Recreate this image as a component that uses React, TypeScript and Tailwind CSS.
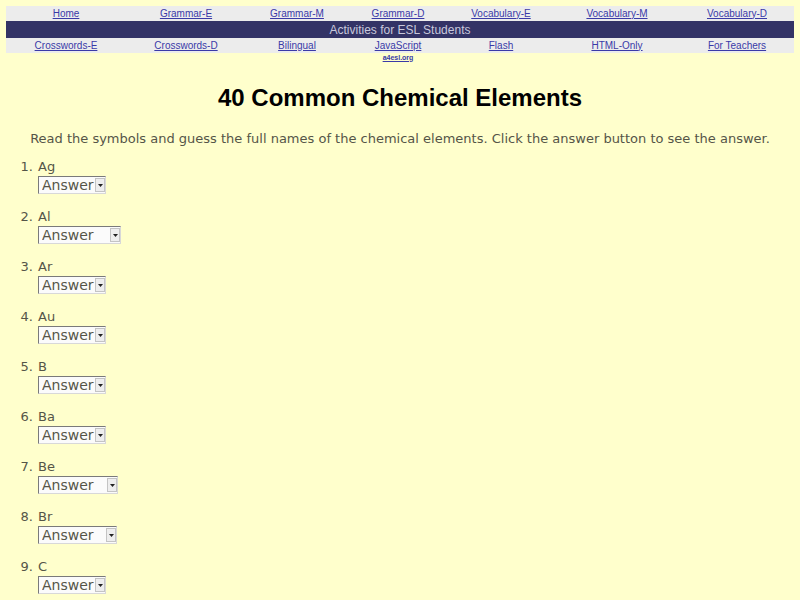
import { useState } from "react";

const topLinks = [
  "Home",
  "Grammar-E",
  "Grammar-M",
  "Grammar-D",
  "Vocabulary-E",
  "Vocabulary-M",
  "Vocabulary-D",
];

const bottomLinks = [
  "Crosswords-E",
  "Crosswords-D",
  "Bilingual",
  "JavaScript",
  "Flash",
  "HTML-Only",
  "For Teachers",
];

// width of each select follows its longest option, like the browser did
const elements = [
  { symbol: "Ag", name: "Silver", width: "w-[68px]" },
  { symbol: "Al", name: "Aluminum", width: "w-[83px]" },
  { symbol: "Ar", name: "Argon", width: "w-[68px]" },
  { symbol: "Au", name: "Gold", width: "w-[68px]" },
  { symbol: "B", name: "Boron", width: "w-[68px]" },
  { symbol: "Ba", name: "Barium", width: "w-[68px]" },
  { symbol: "Be", name: "Beryllium", width: "w-[80px]" },
  { symbol: "Br", name: "Bromine", width: "w-[79px]" },
  { symbol: "C", name: "Carbon", width: "w-[68px]" },
];

const cols = "grid grid-cols-[120px_120px_102px_100px_106px_126px_1fr]";

const NavRow = ({ links }: { links: string[] }) => (
  <div className={`${cols} h-[15px] items-center bg-[#ececec]`}>
    {links.map((link) => (
      <div key={link} className="text-center text-[10px] leading-none">
        <a href="#" className="text-[#3a3aa8] underline">
          {link}
        </a>
      </div>
    ))}
  </div>
);

const AnswerSelect = ({ name, width }: { name: string; width: string }) => {
  const [value, setValue] = useState("Answer");
  return (
    <div className={`relative h-[18px] ${width}`}>
      <select
        value={value}
        onChange={(e) => setValue(e.target.value)}
        className="h-full w-full appearance-none border border-t-[#7a7a7a] border-l-[#7a7a7a] border-r-[#d8d8d8] border-b-[#d8d8d8] bg-[#fbfbfb] pl-[3px] text-[14px] leading-none text-[#555548] outline-none"
      >
        <option>Answer</option>
        <option>{name}</option>
      </select>
      <div className="pointer-events-none absolute right-[1px] top-[2px] flex h-[14px] w-[10px] items-center justify-center border border-[#c4c4c4] bg-[#eeeeee]">
        <svg width="5" height="3" viewBox="0 0 5 3">
          <path d="M0 0 H5 L2.5 3 Z" fill="#222" />
        </svg>
      </div>
    </div>
  );
};

export default function App() {
  return (
    <div className="min-h-screen bg-[#ffffcc] font-['DejaVu_Sans',sans-serif] text-[#555548]">
      <div className="px-[6px] pt-[6px] font-['Liberation_Sans',Arial,sans-serif]">
        <NavRow links={topLinks} />
        <div className="flex h-[17px] items-center justify-center bg-[#333366] text-[12px] leading-none text-[#c8c8dc]">
          Activities for ESL Students
        </div>
        <NavRow links={bottomLinks} />
        <div className={`${cols} h-[8px] items-center`}>
          <div className="col-start-4 text-center text-[7px] leading-none">
            <a href="#" className="font-bold text-[#3a3aa8] underline">
              a4esl.org
            </a>
          </div>
        </div>
      </div>

      <h1 className="mt-[23px] text-center font-['Liberation_Sans',Arial,sans-serif] text-[24px] font-bold leading-[28px] text-black">
        40 Common Chemical Elements
      </h1>

      <p className="mt-[19px] text-center text-[13px] leading-[15px]">
        Read the symbols and guess the full names of the chemical elements.
        Click the answer button to see the answer.
      </p>

      <ol className="mt-[11px] list-decimal pl-[37px] text-[13px]">
        {elements.map((el) => (
          <li key={el.symbol} className="mb-[13px] pl-[1px]">
            <div className="leading-[17px]">{el.symbol}</div>
            <div className="mt-[1px]">
              <AnswerSelect name={el.name} width={el.width} />
            </div>
          </li>
        ))}
      </ol>
    </div>
  );
}
